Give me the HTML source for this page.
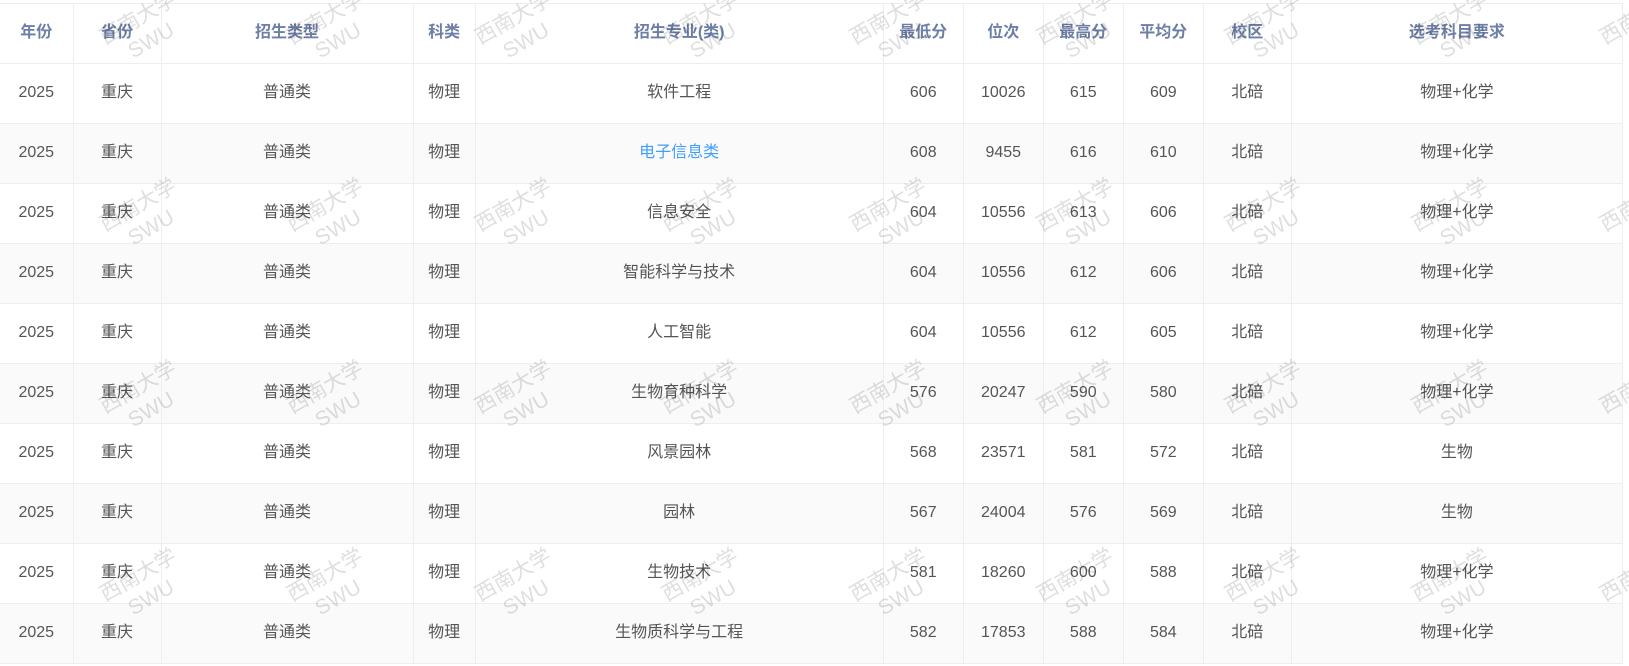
<!DOCTYPE html>
<html><head><meta charset="utf-8"><style>
body{margin:0;background:#fff;width:1629px;height:666px;overflow:hidden;position:relative;font-family:"Liberation Sans","Noto Sans CJK SC",sans-serif;}
table{position:absolute;left:0;top:3px;border-collapse:collapse;table-layout:fixed;width:1623px;}
td,th{border:1px solid #ebeef5;height:59px;padding:0;text-align:center;font-size:16px;color:#555;line-height:20px;vertical-align:middle;}
td span,th span{display:inline-block;height:20px;line-height:20px;vertical-align:middle;}
th{color:#6d7fa6;font-weight:bold;}
tr:nth-child(odd) td{background:#fafafa;}
tr td:first-child,tr th:first-child{border-left:none;}
a{color:#409eff;text-decoration:none;}
.wm{position:absolute;width:120px;text-align:center;transform:translate(-60px,-25px) rotate(-30deg);color:rgba(0,0,0,0.13);font-size:21px;line-height:26px;pointer-events:none;}
</style></head><body>
<table>
<colgroup><col style="width:73px"><col style="width:88px"><col style="width:252px"><col style="width:62px"><col style="width:408px"><col style="width:80px"><col style="width:80px"><col style="width:80px"><col style="width:80px"><col style="width:88px"><col style="width:331px"></colgroup>
<tbody id="tb"></tbody>
</table>
<div id="w"></div>
<script>
var rows=[["年份","省份","招生类型","科类","招生专业(类)","最低分","位次","最高分","平均分","校区","选考科目要求"],
["2025","重庆","普通类","物理","软件工程","606","10026","615","609","北碚","物理+化学"],
["2025","重庆","普通类","物理","<a>电子信息类</a>","608","9455","616","610","北碚","物理+化学"],
["2025","重庆","普通类","物理","信息安全","604","10556","613","606","北碚","物理+化学"],
["2025","重庆","普通类","物理","智能科学与技术","604","10556","612","606","北碚","物理+化学"],
["2025","重庆","普通类","物理","人工智能","604","10556","612","605","北碚","物理+化学"],
["2025","重庆","普通类","物理","生物育种科学","576","20247","590","580","北碚","物理+化学"],
["2025","重庆","普通类","物理","风景园林","568","23571","581","572","北碚","生物"],
["2025","重庆","普通类","物理","园林","567","24004","576","569","北碚","生物"],
["2025","重庆","普通类","物理","生物技术","581","18260","600","588","北碚","物理+化学"],
["2025","重庆","普通类","物理","生物质科学与工程","582","17853","588","584","北碚","物理+化学"]];
var t='';rows.forEach(function(r,i){var c=i?'td':'th';t+='<tr>'+r.map(function(v){return '<'+c+'><span>'+v+'</span></'+c+'>';}).join('')+'</tr>';});
document.getElementById('tb').innerHTML=t;
var xs=[145,332,520,707,895,1082,1270,1457,1645],ys=[29,216,398,586],h='';
ys.forEach(function(y){xs.forEach(function(x){h+='<div class="wm" style="left:'+x+'px;top:'+y+'px">西南大学<br>SWU</div>';});});
document.getElementById('w').innerHTML=h;
</script>
</body></html>
